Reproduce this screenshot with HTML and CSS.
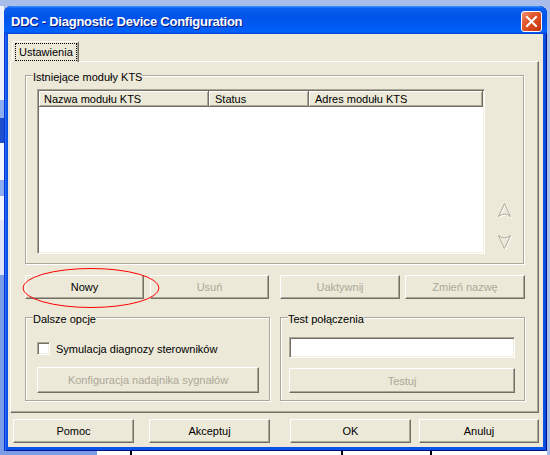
FILE: index.html
```html
<!DOCTYPE html>
<html lang="pl">
<head>
<meta charset="utf-8">
<title>DDC - Diagnostic Device Configuration</title>
<link rel="stylesheet" href="styles.css">
</head>
<body>
<div class="window">
  <div class="titlebar">
    <span class="title">DDC - Diagnostic Device Configuration</span>
    <span class="close">
      <svg width="19" height="19" viewBox="0 0 19 19"><path d="M5 5 L14 14 M14 5 L5 14" stroke="#fff" stroke-width="2" stroke-linecap="square"/></svg>
    </span>
  </div>
  <div class="client">
    <div class="tabstrip">
      <div class="tab"><span class="focus">Ustawienia</span></div>
    </div>
    <div class="panel">
      <fieldset class="group group-modules">
        <legend>Istniejące moduły KTS</legend>
        <div class="gbody modules-body">
          <div class="listview">
            <div class="lv-header">
              <div class="lv-col c1">Nazwa modułu KTS</div>
              <div class="lv-col c2">Status</div>
              <div class="lv-col c3">Adres modułu KTS</div>
            </div>
          </div>
          <div class="arrows">
            <svg width="16" height="16" viewBox="0 0 16 16"><path d="M2.5 15.5 L8.5 2.5 L14.5 15.5 Q8.5 10.5 2.5 15.5 Z" fill="none" stroke="#fff"/><path d="M1.5 14.5 L7.5 1.5 L13.5 14.5 Q7.5 9.5 1.5 14.5 Z" fill="none" stroke="#ACA899"/></svg>
            <svg width="16" height="16" viewBox="0 0 16 16"><path d="M2.5 2.5 L8.5 15.5 L14.5 2.5 Q8.5 7.5 2.5 2.5 Z" fill="none" stroke="#fff"/><path d="M1.5 1.5 L7.5 14.5 L13.5 1.5 Q7.5 6.5 1.5 1.5 Z" fill="none" stroke="#ACA899"/></svg>
          </div>
        </div>
      </fieldset>
      <div class="btn-row">
        <div class="btn w119">Nowy</div>
        <div class="btn w119 gap6 disabled">Usuń</div>
        <div class="btn w120 gap11 disabled">Uaktywnij</div>
        <div class="btn w120 gap5 disabled">Zmień nazwę</div>
        <svg class="highlight" width="140" height="41" viewBox="0 0 140 41"><ellipse cx="69" cy="20" rx="68" ry="19.5" fill="none" stroke="#f00" stroke-width="1"/></svg>
      </div>
      <div class="lower">
        <fieldset class="group group-half">
          <legend>Dalsze opcje</legend>
          <div class="gbody options-body">
            <div class="check-row"><span class="checkbox"></span><span>Symulacja diagnozy sterowników</span></div>
            <div class="btn btn-config disabled">Konfiguracja nadajnika sygnałów</div>
          </div>
        </fieldset>
        <fieldset class="group group-half">
          <legend>Test połączenia</legend>
          <div class="gbody test-body">
            <div class="textbox"></div>
            <div class="btn btn-test disabled">Testuj</div>
          </div>
        </fieldset>
      </div>
    </div>
    <div class="footer">
      <div class="btn w121">Pomoc</div>
      <div class="btn w121 gap15">Akceptuj</div>
      <div class="btn w121 gap20">OK</div>
      <div class="btn w120 gap8">Anuluj</div>
    </div>
  </div>
</div>
<div class="desk-strip"></div>
</body>
</html>
```

FILE: styles.css
```css
* { box-sizing: border-box; }
html, body { margin: 0; padding: 0; }
body {
  width: 550px;
  height: 455px;
  overflow: hidden;
  padding-top: 6px;
  font-family: "Liberation Sans", Arial, sans-serif;
  font-size: 11px;
  color: #000;
  background-color: #A9BDEA;
  background-image: linear-gradient(to bottom, #A9BDEA 0 6px, #EEF2FB 6px 100px, #8CAEF0 100px 118px, #1E4FCF 118px 143px, #F3F6FD 143px 180px, #8CAEF0 180px 196px, #F3F6FD 196px 220px, #E0E6F8 220px 275px, #7B9DE8 275px);
  background-size: 4px 100%;
  background-repeat: no-repeat;
}

.window {
  margin-left: 4px;
  width: 543px;
  height: 445px;
  border-radius: 8px 8px 0 0;
  background: #0A52E6;
  box-shadow: inset 1px 0 #0831D9, inset 2px 0 #2A6CF2, inset -1px 0 #00138C, inset -2px 0 #0846D8, inset 0 -1px #00138C;
  display: flex;
  flex-direction: column;
}

.titlebar {
  height: 28px;
  flex: none;
  display: flex;
  justify-content: space-between;
  align-items: flex-start;
  padding: 0 5px 0 7px;
  border-radius: 8px 8px 0 0;
  background: linear-gradient(to bottom, #3D95FF 0%, #0A5EF0 9%, #0053E8 40%, #005EF8 85%, #0062FC 92%, #0050E8 96%, #003DD7 100%);
}
.title {
  margin-top: 8px;
  color: #fff;
  font-weight: bold;
  font-size: 13px;
  line-height: 16px;
  letter-spacing: -0.25px;
  text-shadow: 1px 1px #0A1883;
  white-space: nowrap;
}
.close {
  margin-top: 5px;
  width: 21px;
  height: 21px;
  border: 1px solid #fff;
  border-radius: 3px;
  background: linear-gradient(135deg, #F2977A 0%, #E2592F 35%, #D5441A 70%, #B8300C 100%);
  display: flex;
}

.client {
  flex: 1;
  margin: 0 4px 4px;
  background: #ECE9D8;
  display: flex;
  flex-direction: column;
}

.tabstrip {
  height: 27px;
  flex: none;
  padding: 7px 0 0 4px;
  display: flex;
  align-items: flex-end;
}
.tab {
  position: relative;
  z-index: 1;
  width: 67px;
  height: 21px;
  margin-bottom: -1px;
  padding: 1px 0 0 2px;
  background: #ECE9D8;
  border-left: 1px solid #fff;
  border-top: 1px solid #fff;
  border-right: 1px solid #716F64;
  border-radius: 2px 2px 0 0;
  box-shadow: inset -1px 0 #ACA899;
}
.focus {
  display: block;
  width: 62px;
  height: 18px;
  border: 1px dotted #000;
  padding: 0 0 0 3px;
  line-height: 16px;
}

.panel {
  flex: none;
  margin-left: 2px;
  width: 529px;
  height: 352px;
  border: 1px solid;
  border-color: #fff #716F64 #716F64 #fff;
  box-shadow: inset -1px -1px #ACA899;
}

.group {
  margin: 0;
  padding: 0;
  min-width: 0;
  border: 1px solid #ACA899;
  box-shadow: inset 1px 1px #fff, 1px 1px #fff;
}
.group legend {
  margin-left: 7px;
  padding: 3px 0 0 0;
  height: 15px;
  line-height: 12px;
  background: #ECE9D8;
  white-space: nowrap;
}

.group-modules {
  margin: 6px 0 0 14px;
  width: 499px;
}
.modules-body {
  display: flex;
  padding: 6px 0 9px 11px;
}
.listview {
  width: 448px;
  height: 165px;
  background: #fff;
  border: 1px solid;
  border-color: #ACA899 #fff #fff #ACA899;
  box-shadow: inset 1px 1px #716F64, inset -1px -1px #F1EFE2;
  padding: 1px;
}
.lv-header {
  display: flex;
  height: 16px;
}
.lv-col {
  height: 16px;
  padding: 2px 0 0 5px;
  line-height: 13px;
  background: #ECE9D8;
  border-right: 1px solid #716F64;
  border-bottom: 1px solid #716F64;
  box-shadow: inset 1px 1px #fff, inset -1px -1px #ACA899;
  white-space: nowrap;
}
.c1 { width: 170px; }
.c2 { width: 100px; padding-left: 6px; }
.c3 { width: 174px; padding-left: 6px; }

.arrows {
  margin-left: 12px;
  width: 16px;
  display: flex;
  flex-direction: column;
  justify-content: flex-end;
  gap: 16px;
  padding-bottom: 4px;
}
.arrows svg { display: block; }

.btn {
  height: 24px;
  flex: none;
  display: flex;
  align-items: center;
  justify-content: center;
  background: #ECE9D8;
  border: 1px solid;
  border-color: #fff #716F64 #716F64 #fff;
  box-shadow: inset -1px -1px #ACA899;
  white-space: nowrap;
}
.btn.disabled { color: #ACA899; }
.w119 { width: 119px; }
.w120 { width: 120px; }
.w121 { width: 121px; }
.gap5 { margin-left: 5px; }
.gap6 { margin-left: 6px; }
.gap8 { margin-left: 8px; }
.gap11 { margin-left: 11px; }
.gap15 { margin-left: 15px; }
.gap20 { margin-left: 20px; }

.btn-row {
  position: relative;
  display: flex;
  margin: 11px 0 0 14px;
}
.highlight {
  position: absolute;
  left: -3px;
  top: -7px;
  pointer-events: none;
}

.lower {
  display: flex;
  gap: 10px;
  margin: 11px 0 0 14px;
}
.group-half { width: 245px; }
.options-body { padding: 17px 0 7px 11px; }
.check-row {
  display: flex;
  align-items: center;
  gap: 6px;
  height: 13px;
}
.checkbox {
  width: 13px;
  height: 13px;
  background: #fff;
  border: 1px solid;
  border-color: #ACA899 #fff #fff #ACA899;
  box-shadow: inset 1px 1px #716F64, inset -1px -1px #F1EFE2;
}
.btn-config {
  margin-top: 12px;
  width: 222px;
  height: 26px;
}
.test-body { padding: 12px 0 7px 8px; }
.textbox {
  width: 226px;
  height: 21px;
  background: #fff;
  border: 1px solid;
  border-color: #ACA899 #fff #fff #ACA899;
  box-shadow: inset 1px 1px #716F64, inset -1px -1px #F1EFE2;
}
.btn-test {
  margin-top: 10px;
  width: 226px;
  height: 25px;
}

.footer {
  display: flex;
  margin-top: 6px;
  padding-left: 5px;
}

.desk-strip {
  width: 550px;
  height: 4px;
  background: linear-gradient(to right, #7B9DE8 0 97px, #fff 97px 130px, #000 130px 132px, #fff 132px 341px, #000 341px 343px, #fff 343px 430px, #000 430px 432px, #fff 432px 547px, #A9BDEA 547px);
}
```
